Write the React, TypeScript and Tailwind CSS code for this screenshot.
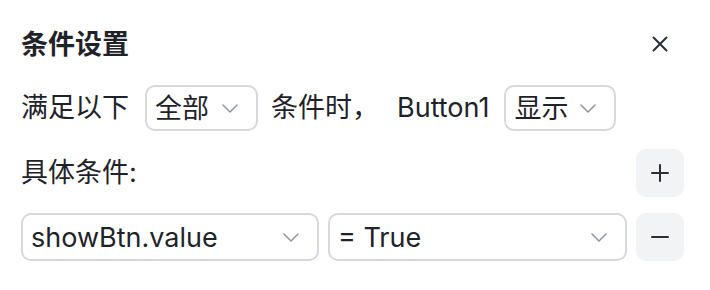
import type { ReactNode } from "react";

function Chevron() {
  return (
    <svg width="16" height="9" viewBox="0 0 16 9" fill="none" className="shrink-0 text-[#8f959e]">
      <polyline points="1,1 8,8 15,1" stroke="currentColor" strokeWidth="1.5" strokeLinecap="round" strokeLinejoin="round" />
    </svg>
  );
}

function Select({ value, className }: { value: string; className: string }) {
  return (
    <div
      className={`flex shrink-0 items-center justify-between rounded-[10px] border-2 border-[#d6d8dc] bg-white pl-[8px] pr-[18px] ${className}`}
    >
      <span className="leading-none">{value}</span>
      <Chevron />
    </div>
  );
}

function IconButton({ children }: { children: ReactNode }) {
  return (
    <button className="flex h-12 w-12 shrink-0 items-center justify-center rounded-[10px] bg-[#f2f3f5] text-[#2b2f36]">
      {children}
    </button>
  );
}

export default function App() {
  return (
    <div
      className="h-[290px] w-[710px] bg-white pl-[21px] pr-[26px] pt-[20px] text-[27px] text-[#1f2329]"
      style={{ fontFamily: 'Inter, "Noto Sans CJK SC", sans-serif' }}
    >
      <div className="flex h-12 items-center justify-between">
        <h2 className="font-semibold leading-none">条件设置</h2>
        <div className="flex w-12 justify-center">
          <svg width="16" height="16" viewBox="0 0 16 16" fill="none" className="text-[#2b2f36]">
            <path d="M1.5 1.5 14.5 14.5M14.5 1.5 1.5 14.5" stroke="currentColor" strokeWidth="2" strokeLinecap="round" />
          </svg>
        </div>
      </div>

      <div className="mt-[17px] flex h-[46px] items-center">
        <span className="mr-[16px]">满足以下</span>
        <Select value="全部" className="h-[46px] w-[113px]" />
        <span className="ml-[13px] mr-[18px]">条件时，</span>
        <span className="mr-[15px]">Button1</span>
        <Select value="显示" className="h-[46px] w-[112px]" />
      </div>

      <div className="mt-[18px] flex h-12 items-center justify-between">
        <span>具体条件:</span>
        <IconButton>
          <svg width="18" height="18" viewBox="0 0 18 18" fill="none">
            <path d="M9 1v16M1 9h16" stroke="currentColor" strokeWidth="2" strokeLinecap="round" />
          </svg>
        </IconButton>
      </div>

      <div className="mt-4 flex h-12 items-center gap-[9px]">
        <Select value="showBtn.value" className="h-12 w-[298px]" />
        <Select value="= True" className="h-12 w-[299px]" />
        <IconButton>
          <svg width="18" height="18" viewBox="0 0 18 18" fill="none">
            <path d="M1 9h16" stroke="currentColor" strokeWidth="2" strokeLinecap="round" />
          </svg>
        </IconButton>
      </div>
    </div>
  );
}
